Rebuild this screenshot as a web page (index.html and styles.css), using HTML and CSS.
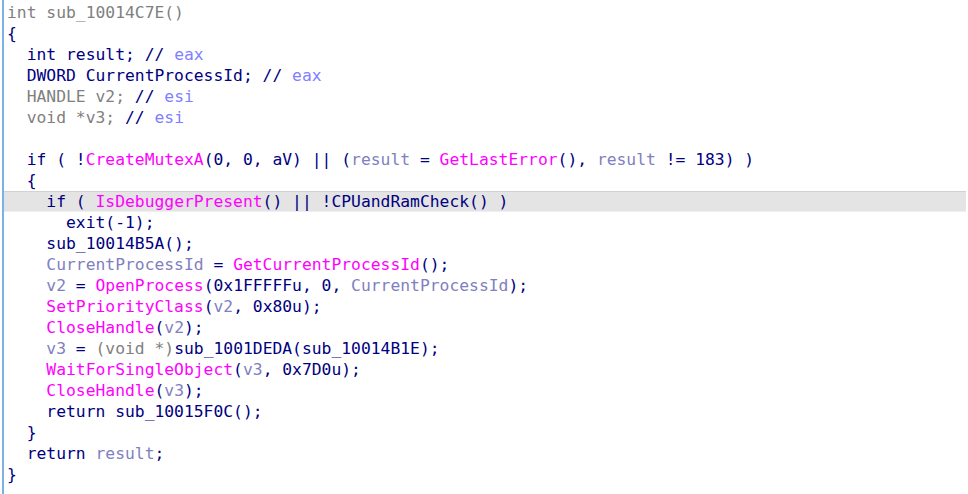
FILE: index.html
```html
<!DOCTYPE html>
<html>
<head>
<meta charset="utf-8">
<link rel="stylesheet" href="styles.css">
</head>
<body>
<div class="view">
<div class="code">
<div class="ln"><span class="g">int sub_10014C7E()</span></div>
<div class="ln">{</div>
<div class="ln">  int result; // <span class="c">eax</span></div>
<div class="ln">  DWORD CurrentProcessId; // <span class="c">eax</span></div>
<div class="ln">  <span class="g">HANDLE v2;</span> // <span class="c">esi</span></div>
<div class="ln">  <span class="g">void *v3;</span> // <span class="c">esi</span></div>
<div class="ln"> </div>
<div class="ln">  if ( !<span class="f">CreateMutexA</span>(0, 0, aV) || (<span class="v">result</span> = <span class="f">GetLastError</span>(), <span class="v">result</span> != 183) )</div>
<div class="ln">  {</div>
<div class="ln hl">    if ( <span class="f">IsDebuggerPresent</span>() || !CPUandRamCheck() )</div>
<div class="ln">      exit(-1);</div>
<div class="ln">    sub_10014B5A();</div>
<div class="ln">    <span class="v">CurrentProcessId</span> = <span class="f">GetCurrentProcessId</span>();</div>
<div class="ln">    <span class="v">v2</span> = <span class="f">OpenProcess</span>(0x1FFFFFu, 0, <span class="v">CurrentProcessId</span>);</div>
<div class="ln">    <span class="f">SetPriorityClass</span>(<span class="v">v2</span>, 0x80u);</div>
<div class="ln">    <span class="f">CloseHandle</span>(<span class="v">v2</span>);</div>
<div class="ln">    <span class="v">v3</span> = <span class="g">(void *)</span>sub_1001DEDA(sub_10014B1E);</div>
<div class="ln">    <span class="f">WaitForSingleObject</span>(<span class="v">v3</span>, 0x7D0u);</div>
<div class="ln">    <span class="f">CloseHandle</span>(<span class="v">v3</span>);</div>
<div class="ln">    return sub_10015F0C();</div>
<div class="ln">  }</div>
<div class="ln">  return <span class="v">result</span>;</div>
<div class="ln">}</div>
</div>
</div>
</body>
</html>
```
FILE: styles.css
```css
html, body {
  margin: 0;
  padding: 0;
  background: #ffffff;
}
.view {
  width: 968px;
  height: 494px;
  overflow: hidden;
  box-sizing: border-box;
  padding-left: 2px;
}
.code {
  border-left: 2px solid #7db0e3;
  height: 100%;
  padding-top: 2px;
  box-sizing: border-box;
  font-family: "DejaVu Sans Mono", "Liberation Mono", monospace;
  font-size: 16.33px;
  color: #000080;
}
.ln {
  white-space: pre;
  height: 21px;
  line-height: 21px;
  padding-left: 3px;
}
.hl {
  background: #e4e4e4;
  margin-right: 2px;
  box-shadow: inset 0 1px 0 #d2d2d2, inset 0 -1px 0 #efefef;
}
.g { color: #808080; }
.c { color: #8080ff; }
.f { color: #ff00ff; }
.v { color: #8080c0; }
```
